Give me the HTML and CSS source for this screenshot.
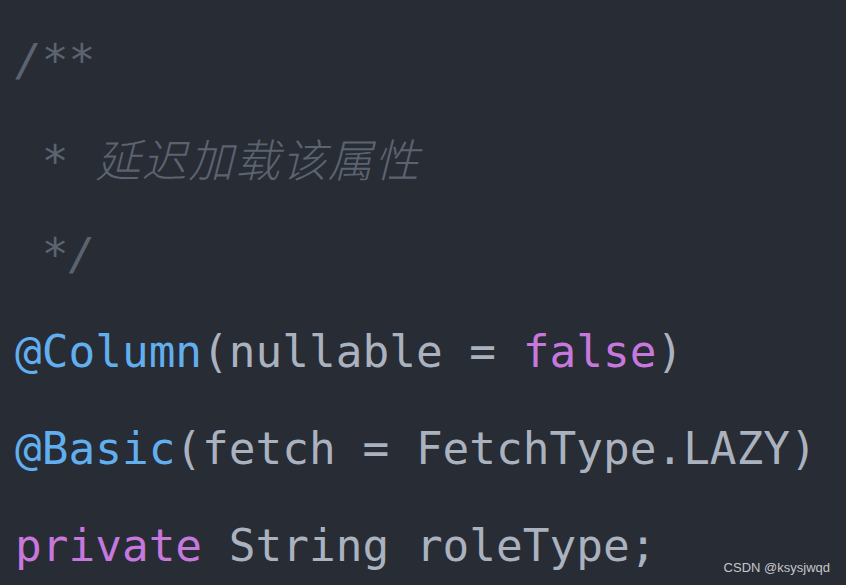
FILE: index.html
```html
<!DOCTYPE html>
<html lang="zh">
<head>
<meta charset="utf-8">
<link rel="stylesheet" href="styles.css">
</head>
<body>
<div class="code">
<div class="line"><span class="cm">/**</span></div>
<div class="line"><span class="cm"> * <span class="cjk">延迟加载该属性</span></span></div>
<div class="line"><span class="cm"> */</span></div>
<div class="line"><span class="an">@Column</span>(nullable = <span class="kw">false</span>)</div>
<div class="line"><span class="an">@Basic</span>(fetch = FetchType.LAZY)</div>
<div class="line"><span class="kw">private</span> String roleType;</div>
</div>
<div class="mark">CSDN @ksysjwqd</div>
</body>
</html>
```
FILE: styles.css
```css
html, body {
  margin: 0;
  padding: 0;
  background: #282c34;
  width: 846px;
  height: 585px;
  overflow: hidden;
}
body {
  position: relative;
}
.code {
  padding: 12px 0 0 15px;
  font-family: "DejaVu Sans Mono", "Noto Sans CJK SC", monospace;
  font-size: 44.4px;
  line-height: 97px;
  color: #abb2bf;
}
.line {
  white-space: pre;
  height: 97px;
}
.cm {
  color: #5c6370;
  font-style: italic;
}
.cjk {
  font-family: "Noto Sans CJK SC", sans-serif;
  font-size: 45px;
  font-weight: 300;
  letter-spacing: 1.5px;
}
.an { color: #61afef; }
.kw { color: #c678dd; }
.mark {
  position: absolute;
  right: 16px;
  bottom: 10px;
  font-family: "Liberation Sans", Arial, sans-serif;
  font-size: 13px;
  color: #c4c7cc;
}
```
